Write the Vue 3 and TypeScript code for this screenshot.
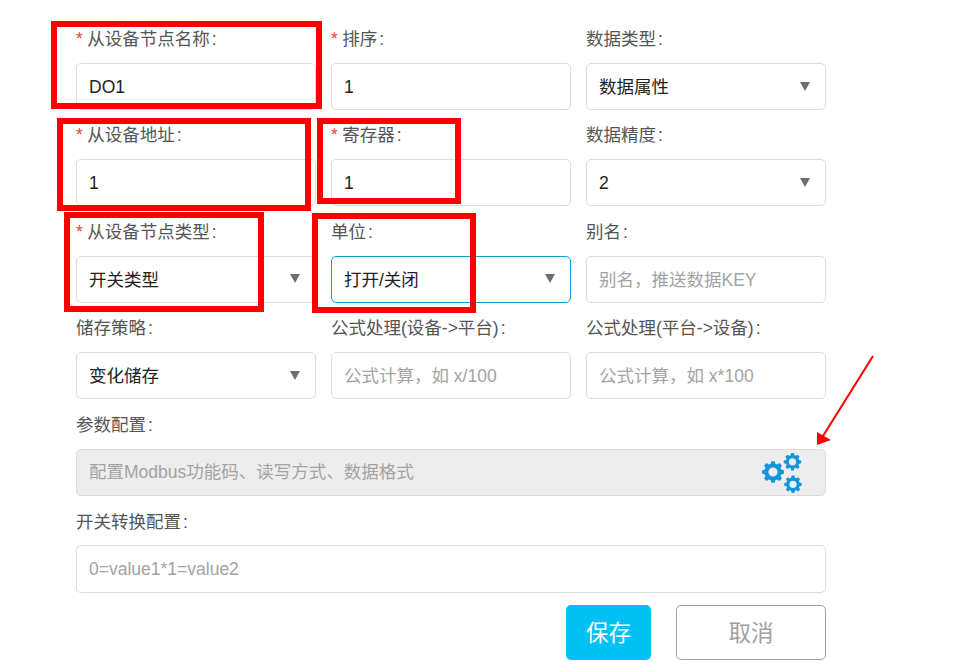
<script setup lang="ts">
interface Field {
  label: string
  required?: boolean
  kind: 'input' | 'select'
  value?: string
  placeholder?: string
  focused?: boolean
}

const fields: Field[] = [
  { label: '从设备节点名称', required: true, kind: 'input', value: 'DO1' },
  { label: '排序', required: true, kind: 'input', value: '1' },
  { label: '数据类型', kind: 'select', value: '数据属性' },
  { label: '从设备地址', required: true, kind: 'input', value: '1' },
  { label: '寄存器', required: true, kind: 'input', value: '1' },
  { label: '数据精度', kind: 'select', value: '2' },
  { label: '从设备节点类型', required: true, kind: 'select', value: '开关类型' },
  { label: '单位', kind: 'select', value: '打开/关闭', focused: true },
  { label: '别名', kind: 'input', placeholder: '别名，推送数据KEY' },
  { label: '储存策略', kind: 'select', value: '变化储存' },
  { label: '公式处理(设备->平台)', kind: 'input', placeholder: '公式计算，如 x/100' },
  { label: '公式处理(平台->设备)', kind: 'input', placeholder: '公式计算，如 x*100' },
]

function gear(cx: number, cy: number, outer: number, root: number, hole: number, teeth = 8): string {
  const step = (Math.PI * 2) / teeth
  const pts: string[] = []
  for (let i = 0; i < teeth; i++) {
    const a = i * step
    const spots: [number, number][] = [
      [root, a - step * 0.36],
      [outer, a - step * 0.2],
      [outer, a + step * 0.2],
      [root, a + step * 0.36],
    ]
    for (const [r, t] of spots) {
      pts.push(`${(cx + r * Math.cos(t)).toFixed(2)} ${(cy + r * Math.sin(t)).toFixed(2)}`)
    }
  }
  const ring = `M${cx - hole} ${cy}a${hole} ${hole} 0 1 0 ${hole * 2} 0a${hole} ${hole} 0 1 0 ${-hole * 2} 0Z`
  return `M${pts.join('L')}Z${ring}`
}

const gears = [
  gear(12, 19, 11, 8.6, 4.6),
  gear(31.5, 8.8, 8.8, 6.8, 3.6),
  gear(32, 31.3, 8.8, 6.8, 3.6),
]

const redBoxes = [
  { left: 51, top: 21, width: 271, height: 88 },
  { left: 57, top: 118, width: 254, height: 93 },
  { left: 64, top: 212, width: 200, height: 100 },
  { left: 317, top: 118, width: 144, height: 86 },
  { left: 312, top: 213, width: 164, height: 100 },
]
</script>

<template>
  <div class="page">
    <form class="form" @submit.prevent>
      <div v-for="f in fields" :key="f.label" class="field">
        <label class="label"><span v-if="f.required" class="star">*</span>{{ f.label }}<span class="colon">:</span></label>
        <div v-if="f.kind === 'select'" class="control select" :class="{ focused: f.focused }">
          <span>{{ f.value }}</span>
          <i class="caret"></i>
        </div>
        <input v-else class="control" :value="f.value" :placeholder="f.placeholder" />
      </div>

      <div class="field wide">
        <label class="label">参数配置<span class="colon">:</span></label>
        <div class="control disabled">
          <span>配置Modbus功能码、读写方式、数据格式</span>
          <svg class="gears" width="42" height="42" viewBox="0 0 42 42" fill="#1296db" fill-rule="evenodd">
            <path v-for="d in gears" :key="d" :d="d" />
          </svg>
        </div>
      </div>

      <div class="field wide last">
        <label class="label">开关转换配置<span class="colon">:</span></label>
        <input class="control tall" placeholder="0=value1*1=value2" />
      </div>

      <div class="actions">
        <button type="button" class="btn primary">保存</button>
        <button type="button" class="btn ghost">取消</button>
      </div>
    </form>

    <div
      v-for="(b, i) in redBoxes"
      :key="i"
      class="red-box"
      :style="{ left: b.left + 'px', top: b.top + 'px', width: b.width + 'px', height: b.height + 'px' }"
    ></div>

    <svg class="arrow" width="965" height="671" viewBox="0 0 965 671">
      <line x1="873" y1="356" x2="823" y2="436" stroke="#ff0000" stroke-width="2" />
      <polygon points="817,432 817,445 831,440" fill="#ff0000" />
    </svg>
  </div>
</template>

<style scoped>
.page {
  position: relative;
  width: 965px;
  height: 671px;
  overflow: hidden;
  background: #fff;
  font-family: "Liberation Sans", "Noto Sans CJK SC", sans-serif;
  font-size: 17.5px;
}
.form {
  display: grid;
  grid-template-columns: repeat(3, 240px);
  column-gap: 15px;
  padding: 14px 0 0 76px;
}
.field {
  display: flex;
  flex-direction: column;
  height: 96.4px;
}
.wide {
  grid-column: 1 / 4;
}
.last {
  height: 109px;
}
.label {
  height: 49px;
  line-height: 51px;
  flex: none;
  color: #555;
  white-space: nowrap;
}
.last .label {
  line-height: 53px;
}
.colon {
  margin-left: 2px;
}
.star {
  color: #ff3b3b;
  margin-right: 4.5px;
}
.control {
  box-sizing: border-box;
  width: 100%;
  height: 47px;
  flex: none;
  display: block;
  padding: 2px 12px 0;
  border: 1px solid #dcdcdc;
  border-radius: 5px;
  background: #fff;
  color: #222;
  font: inherit;
  line-height: 43px;
  outline: none;
}
.control::placeholder {
  color: #a3a3a3;
  opacity: 1;
}
.tall {
  height: 48px;
}
.select {
  display: flex;
  align-items: center;
  justify-content: space-between;
}
.focused {
  border-color: #0f9fd0;
}
.caret {
  width: 0;
  height: 0;
  margin-top: -3px;
  margin-right: 3px;
  border-left: 5px solid transparent;
  border-right: 5px solid transparent;
  border-top: 9px solid #6e6e6e;
}
.disabled {
  display: flex;
  align-items: center;
  position: relative;
  padding-top: 0;
  background: #ededed;
  color: #a3a3a3;
}
.gears {
  position: absolute;
  left: 684px;
  top: 3px;
}
.actions {
  grid-column: 1 / 4;
  display: flex;
  justify-content: flex-end;
  gap: 25px;
}
.btn {
  box-sizing: border-box;
  height: 55px;
  font-family: inherit;
  font-size: 22.5px;
  border-radius: 5px;
  padding: 0 0 3px;
}
.primary {
  width: 85px;
  border: none;
  background: #00c1f3;
  color: #fff;
}
.ghost {
  width: 150px;
  border: 1px solid #a0a0a0;
  background: #fff;
  color: #a0a0a0;
}
.red-box {
  position: absolute;
  box-sizing: border-box;
  border: 6px solid #ff0000;
  pointer-events: none;
}
.arrow {
  position: absolute;
  left: 0;
  top: 0;
  pointer-events: none;
}
</style>
